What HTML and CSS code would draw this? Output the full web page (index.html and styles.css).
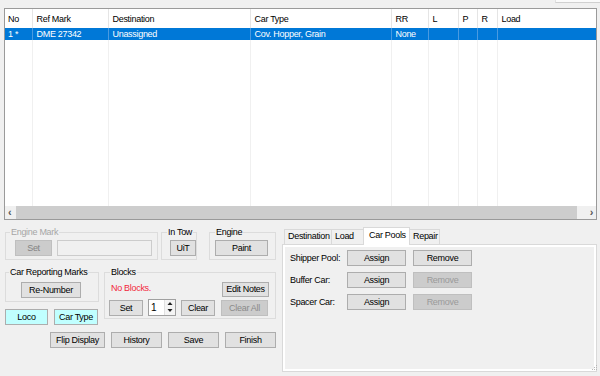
FILE: index.html
```html
<!DOCTYPE html>
<html lang="en">
<head>
    <meta charset="UTF-8">
    <meta name="viewport" content="width=device-width, initial-scale=1.0">
    <title>Car Details</title>
    <link rel="stylesheet" href="styles.css">
</head>
<body>
    <div class="window">
        <div class="topbar"><div class="topbox"></div></div>

        <!-- Car list -->
        <div class="grid">
            <div class="grid-body">
                <table class="cars">
                    <colgroup>
                        <col style="width:27px"><col style="width:76px"><col style="width:142px">
                        <col style="width:141px"><col style="width:37px"><col style="width:30px">
                        <col style="width:19px"><col style="width:20px"><col>
                    </colgroup>
                    <thead>
                        <tr>
                            <th class="first">No</th><th>Ref Mark</th><th>Destination</th><th>Car Type</th>
                            <th>RR</th><th>L</th><th>P</th><th>R</th><th class="last">Load</th>
                        </tr>
                    </thead>
                    <tbody>
                        <tr class="selected">
                            <td class="first">1 *</td><td>DME 27342</td><td>Unassigned</td><td>Cov. Hopper, Grain</td>
                            <td>None</td><td></td><td></td><td></td><td class="last"></td>
                        </tr>
                        <tr class="filler">
                            <td></td><td></td><td></td><td></td><td></td><td></td><td></td><td></td><td class="last"></td>
                        </tr>
                    </tbody>
                </table>
            </div>
            <div class="hscroll">
                <span class="arrow left">&#8249;</span>
                <div class="thumb"></div>
                <span class="arrow right">&#8250;</span>
            </div>
        </div>

        <div class="bottom">
            <div class="left">
                <div class="row1">
                    <fieldset class="group engine-mark">
                        <legend class="disabled">Engine Mark</legend>
                        <button class="btn btn-disabled set-mark">Set</button>
                        <div class="textbox"></div>
                    </fieldset>
                    <fieldset class="group in-tow">
                        <legend>In Tow</legend>
                        <button class="btn uit">UiT</button>
                    </fieldset>
                    <fieldset class="group engine">
                        <legend>Engine</legend>
                        <button class="btn paint">Paint</button>
                    </fieldset>
                </div>

                <div class="row2">
                    <div class="marks-col">
                        <fieldset class="group marks">
                            <legend>Car Reporting Marks</legend>
                            <button class="btn renumber">Re-Number</button>
                        </fieldset>
                        <div class="toggles">
                            <button class="btn btn-cyan loco">Loco</button>
                            <button class="btn btn-cyan cartype">Car Type</button>
                        </div>
                    </div>
                    <fieldset class="group blocks">
                        <legend>Blocks</legend>
                        <div class="blocks-top">
                            <span class="no-blocks">No Blocks.</span>
                            <button class="btn edit-notes">Edit Notes</button>
                        </div>
                        <div class="blocks-row">
                            <button class="btn small">Set</button>
                            <div class="spin">
                                <span class="spin-value">1</span>
                                <div class="spin-arrows">
                                    <svg width="9" height="7" viewBox="0 0 9 7"><path d="M2 5 L4.5 2 L7 5 Z" fill="#222"/></svg>
                                    <svg width="9" height="7" viewBox="0 0 9 7"><path d="M2 2 L4.5 5 L7 2 Z" fill="#222"/></svg>
                                </div>
                            </div>
                            <button class="btn small">Clear</button>
                            <button class="btn btn-disabled clear-all">Clear All</button>
                        </div>
                    </fieldset>
                </div>

                <div class="row3">
                    <button class="btn flip">Flip Display</button>
                    <button class="btn wide">History</button>
                    <button class="btn wide">Save</button>
                    <button class="btn finish">Finish</button>
                </div>
            </div>

            <!-- Tabs -->
            <div class="tabs">
                <div class="tab-strip">
                    <div class="tab t-dest">Destination</div>
                    <div class="tab t-load">Load</div>
                    <div class="tab t-pools active">Car Pools</div>
                    <div class="tab t-repair">Repair</div>
                </div>
                <div class="tab-panel">
                    <div class="tab-page">
                        <div class="pool-row">
                            <span class="pool-label">Shipper Pool:</span>
                            <button class="btn pool-btn">Assign</button>
                            <button class="btn pool-btn">Remove</button>
                        </div>
                        <div class="pool-row">
                            <span class="pool-label">Buffer Car:</span>
                            <button class="btn pool-btn">Assign</button>
                            <button class="btn btn-disabled pool-btn">Remove</button>
                        </div>
                        <div class="pool-row">
                            <span class="pool-label">Spacer Car:</span>
                            <button class="btn pool-btn">Assign</button>
                            <button class="btn btn-disabled pool-btn">Remove</button>
                        </div>
                    </div>
                </div>
            </div>
        </div>

        <svg class="grip" width="8" height="8" viewBox="0 0 8 8">
            <rect x="6" y="0" width="1" height="1" fill="#b8b8b8"/>
            <rect x="4" y="2" width="1" height="1" fill="#b8b8b8"/>
            <rect x="6" y="2" width="1" height="1" fill="#b8b8b8"/>
            <rect x="2" y="4" width="1" height="1" fill="#b8b8b8"/>
            <rect x="4" y="4" width="1" height="1" fill="#b8b8b8"/>
            <rect x="6" y="4" width="1" height="1" fill="#b8b8b8"/>
        </svg>
    </div>
</body>
</html>
```

FILE: styles.css
```css
* {
    margin: 0;
    padding: 0;
    box-sizing: border-box;
}

body {
    background: #f0f0f0;
    font-family: 'Liberation Sans', Arial, sans-serif;
    font-size: 9px;
    letter-spacing: -0.3px;
    color: #000;
}

.window {
    position: relative;
    width: 600px;
    height: 376px;
    overflow: hidden;
}

.topbar {
    height: 8px;
    display: flex;
    justify-content: flex-end;
}

.topbox {
    width: 45px;
    height: 3px;
    background: #fafafa;
    border-left: 1px solid #e0e0e0;
    border-bottom: 1px solid #d0d0d0;
}

/* Car list grid */
.grid {
    margin-left: 4px;
    width: 593px;
    height: 212px;
    border: 1px solid #9a9a9a;
    background: white;
    display: flex;
    flex-direction: column;
}

.grid-body {
    flex: 1;
    display: flex;
}

.cars {
    width: 100%;
    height: 100%;
    border-collapse: collapse;
    table-layout: fixed;
}

.cars th {
    height: 19px;
    font-weight: normal;
    text-align: left;
    padding: 0 0 0 4px;
    border-right: 1px solid #e5e5e5;
    white-space: nowrap;
    overflow: hidden;
}

.cars td {
    padding: 0 0 0 4px;
    border-right: 1px solid #f0f0f0;
    white-space: nowrap;
    overflow: hidden;
}

.cars .first {
    padding-left: 3px;
}

.cars .last {
    border-right: none;
}

.cars .selected td {
    height: 12px;
    background: #0078d7;
    color: white;
    border-right-color: #4a9ae0;
}

.cars .filler td {
    height: auto;
}

.hscroll {
    height: 13px;
    display: flex;
    background: #f0f0f0;
}

.hscroll .arrow {
    font-size: 11px;
    line-height: 12px;
    color: #555;
    font-weight: bold;
}

.hscroll .left {
    width: 11px;
    padding-left: 3px;
}

.hscroll .right {
    width: 19px;
    text-align: right;
    padding-right: 3px;
}

.hscroll .thumb {
    flex: 1;
    background: #cdcdcd;
}

/* Buttons */
.btn {
    height: 16px;
    font-family: inherit;
    font-size: 9px;
    letter-spacing: -0.3px;
    color: #000;
    background: #e1e1e1;
    border: 1px solid #adadad;
    text-align: center;
    line-height: 14px;
    white-space: nowrap;
}

.btn-disabled {
    background: #cccccc;
    border-color: #bfbfbf;
    color: #9a9a9a;
}

.btn-cyan {
    background: #c0ffff;
}

/* Bottom area */
.bottom {
    display: flex;
    padding-left: 5px;
    padding-top: 7px;
}

.left {
    width: 271px;
    display: flex;
    flex-direction: column;
}

.group {
    margin: 0;
    min-width: 0;
    border: 1px solid #dcdcdc;
    display: flex;
    align-items: flex-start;
}

.group legend {
    font-size: 9px;
    line-height: 10px;
    padding: 0 1px;
    white-space: nowrap;
    text-align: left;
}

.group legend.disabled {
    color: #a6a6a6;
}

.row1 {
    display: flex;
}

.engine-mark {
    width: 153px;
    padding: 3px 0 3px 9px;
}

.engine-mark legend {
    margin-left: -5px;
}

.set-mark {
    width: 37px;
    color: #838383;
}

.textbox {
    width: 95px;
    height: 16px;
    margin-left: 5px;
    border: 1px solid #cccccc;
    background: #f0f0f0;
}

.in-tow {
    width: 36px;
    margin-left: 3px;
    padding: 3px 0 3px 8px;
}

.in-tow legend {
    margin-left: -3px;
}

.uit {
    width: 26px;
}

.engine {
    width: 67px;
    margin-left: 12px;
    padding: 3px 0 3px 5px;
}

.engine legend {
    margin-left: 0;
}

.paint {
    width: 53px;
}

.row2 {
    display: flex;
    align-items: flex-start;
    margin-top: 7px;
}

.marks-col {
    width: 94px;
    display: flex;
    flex-direction: column;
}

.marks {
    width: 94px;
    padding: 5px 0 3px 15px;
}

.marks legend {
    margin-left: -12px;
}

.renumber {
    width: 60px;
}

.toggles {
    display: flex;
    gap: 6px;
    margin-top: 7px;
}

.loco {
    width: 43px;
}

.cartype {
    width: 44px;
}

.blocks {
    width: 172px;
    margin-left: 5px;
    padding: 5px 0 2px 4px;
    flex-direction: column;
}

.blocks legend {
    margin-left: 1px;
}

.blocks-top {
    width: 160px;
    display: flex;
    justify-content: space-between;
    align-items: flex-start;
}

.no-blocks {
    color: #f2283c;
    padding: 1px 0 0 2px;
}

.edit-notes {
    width: 47px;
    height: 15px;
    line-height: 13px;
}

.blocks-row {
    display: flex;
    margin-top: 3px;
    gap: 5px;
}

.small {
    width: 34px;
}

.clear-all {
    width: 47px;
    margin-left: 1px;
    color: #8a8a8a;
}

.spin {
    width: 28px;
    height: 17px;
    margin-top: -1px;
    border: 1px solid #a0a0a0;
    background: white;
    display: flex;
}

.spin-value {
    flex: 1;
    padding-left: 2px;
    line-height: 15px;
    font-size: 10px;
}

.spin-arrows {
    width: 11px;
    display: flex;
    flex-direction: column;
    border-left: 1px solid #e0e0e0;
    background: #f4f4f4;
}

.spin-arrows svg {
    display: block;
    height: 7px;
    width: 10px;
}

.row3 {
    display: flex;
    justify-content: flex-end;
    gap: 6px;
    margin-top: 7px;
}

.flip {
    width: 55px;
}

.wide {
    width: 51px;
}

.finish {
    width: 51px;
}

/* Tab control */
.tabs {
    width: 315px;
    margin-left: 6px;
    display: flex;
    flex-direction: column;
}

.tab-strip {
    height: 17px;
    display: flex;
    align-items: flex-end;
    padding-left: 2px;
}

.tab {
    height: 15px;
    line-height: 13px;
    border: 1px solid #d9d9d9;
    border-bottom: none;
    background: #f0f0f0;
    padding-left: 3px;
    margin-right: -1px;
    white-space: nowrap;
}

.tab.active {
    height: 18px;
    background: white;
    position: relative;
    margin-bottom: -1px;
    padding-top: 1px;
    padding-left: 5px;
}

.t-dest { width: 48px; }
.t-load { width: 33px; }
.t-pools { width: 47px; }
.t-repair { width: 31px; }

.tab-panel {
    height: 128px;
    border: 1px solid #d9d9d9;
    background: white;
    padding: 2px;
}

.tab-page {
    height: 100%;
    background: #f0f0f0;
    padding: 3px 0 0 5px;
    display: flex;
    flex-direction: column;
    gap: 6px;
}

.pool-row {
    display: flex;
    align-items: center;
}

.pool-label {
    width: 57px;
}

.pool-btn {
    width: 59px;
    margin-right: 7px;
}

.grip {
    position: absolute;
    right: 2px;
    bottom: 3px;
}
```
